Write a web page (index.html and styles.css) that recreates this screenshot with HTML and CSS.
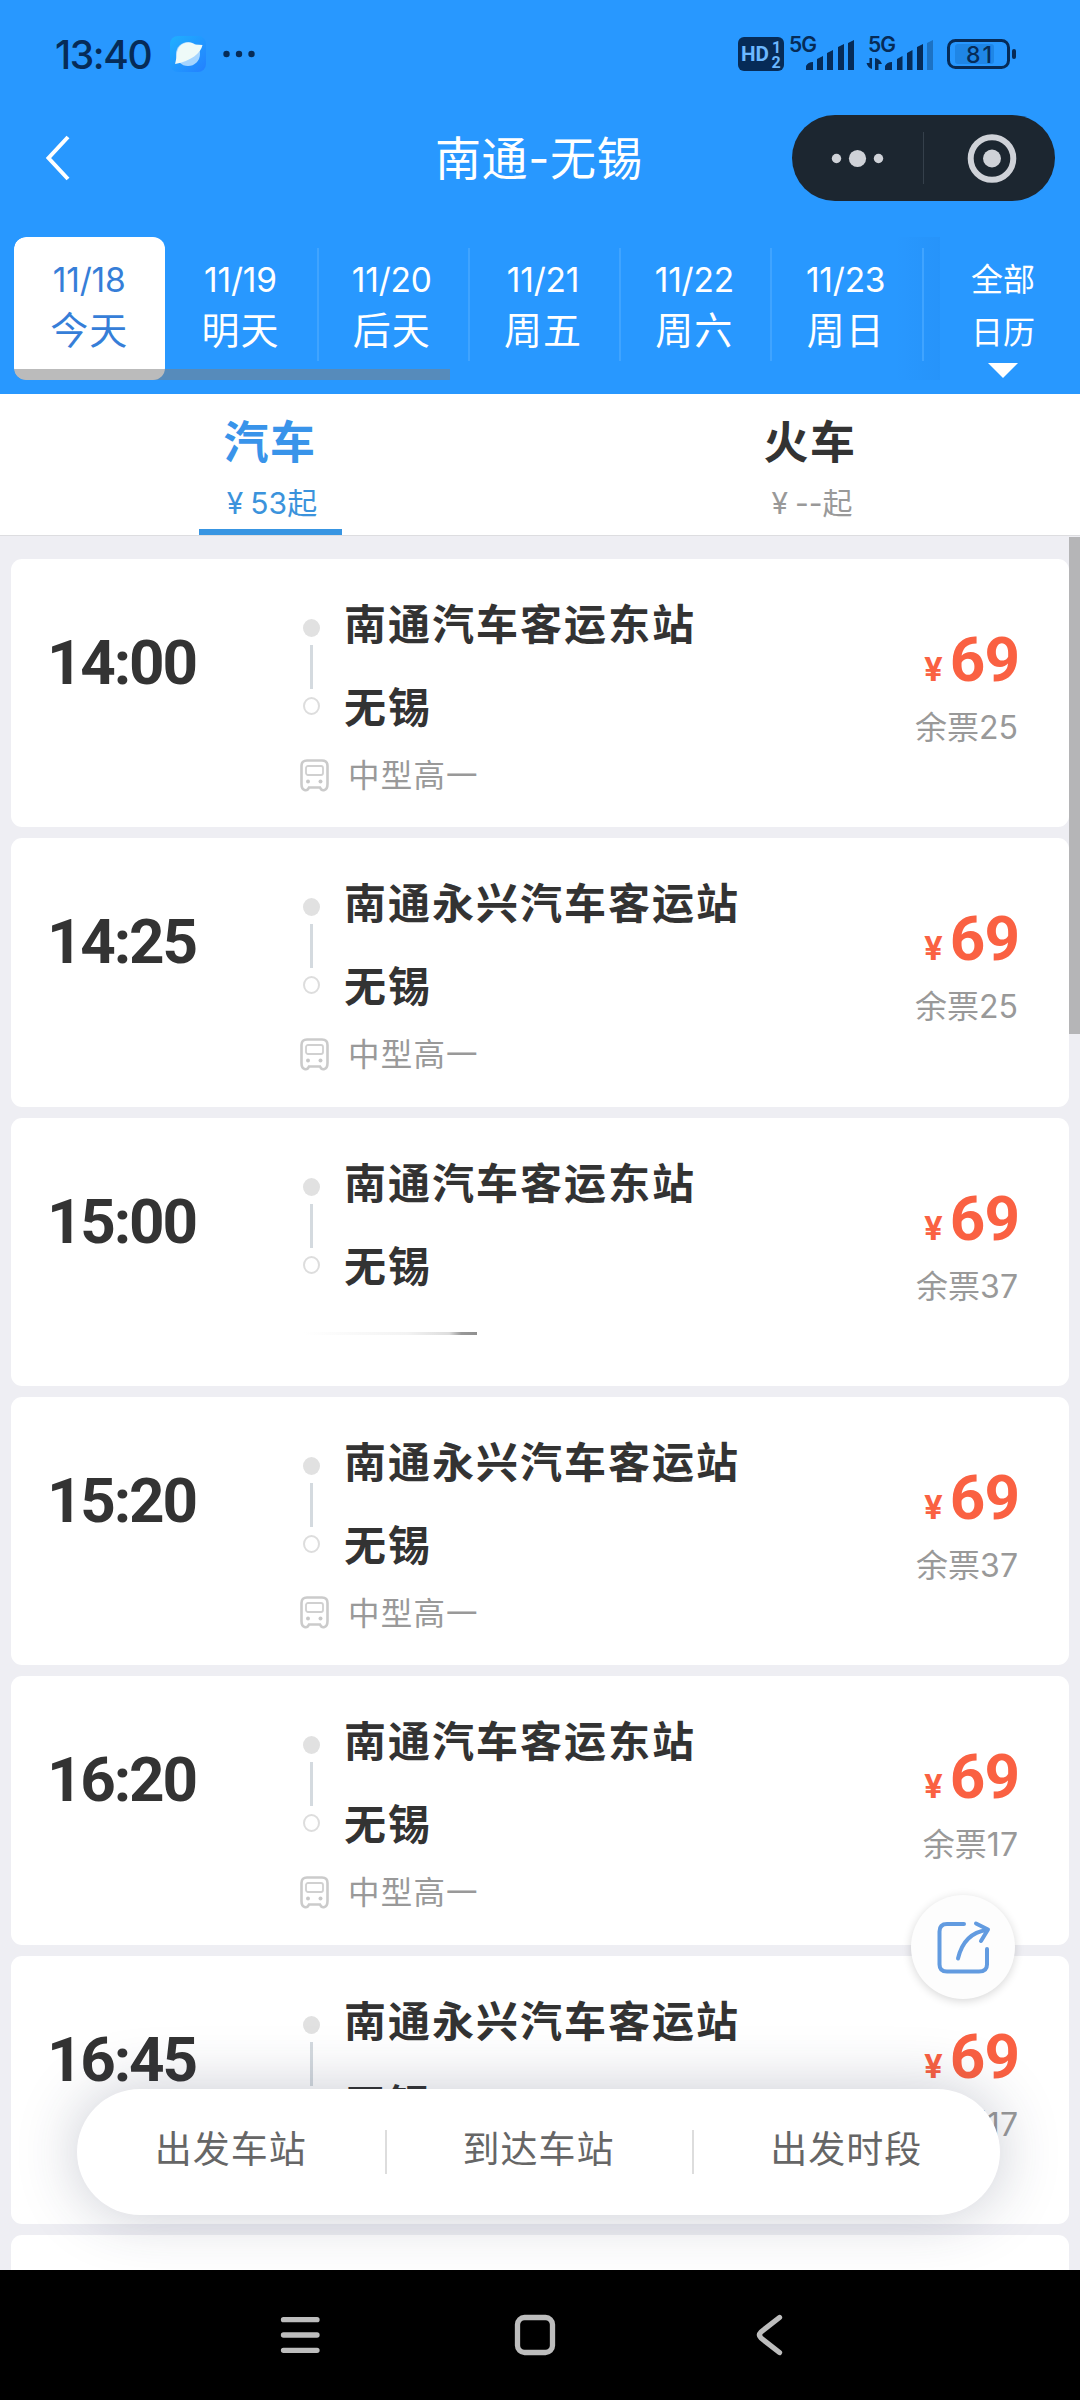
FILE: index.html
```html
<!DOCTYPE html>
<html lang="zh-CN">
  <head>
    <meta charset="UTF-8" />
    <meta name="viewport" content="width=device-width, initial-scale=1.0" />
    <title>南通-无锡</title>
    <link rel="stylesheet" href="styles.css">
  </head>
  <body>
    <svg class="sprite">
      <symbol id="bus" viewBox="0 0 29 33">
        <path d="M7 1.5h15q5.500 0 5.500 5.500v18q0 5-3 6q-3 1-4.500-2.500h-11q-1.500 3.500-4.500 2.500q-3-1-3-6v-18q0-5.500 5.500-5.500z" fill="none" stroke="#cbcbcb" stroke-width="2.600" />
        <rect x="6" y="7" width="17" height="9" rx="2" fill="none" stroke="#d0d0d0" stroke-width="1.800" />
        <circle cx="8" cy="22.500" r="2" fill="#c8c8c8" />
        <circle cx="20.500" cy="22.500" r="2" fill="#c8c8c8" />
      </symbol>
    </svg>
    <div class="phone">
      <header>
        <div class="statusBar">
          <span class="clock">13:40</span>
          <svg class="appIcon" width="36" height="36" viewBox="0 0 36 36">
            <defs>
              <linearGradient id="appBg" x1="0" y1="0" x2="1" y2="1">
                <stop offset="0" stop-color="#1fb0ff" />
                <stop offset="1" stop-color="#2380ff" />
              </linearGradient>
            </defs>
            <rect width="36" height="36" rx="8" fill="url(#appBg)" />
            <circle cx="18" cy="18" r="12" fill="#a5d5ff" />
            <path d="M5 28C7 22 6 17 8.500 12A12 12 0 0 1 25 8.500L32.500 9C31 17 21 25 5 28z" fill="#eefaf8" />
          </svg>
          <svg class="moreDots" width="32" height="8" viewBox="0 0 32 8">
            <circle cx="3.500" cy="4" r="3.200" />
            <circle cx="16" cy="4" r="3.200" />
            <circle cx="28.500" cy="4" r="3.200" />
          </svg>
          <svg class="signals" width="280" height="60" viewBox="738 24 280 60">
            <rect x="738" y="37" width="46" height="34" rx="6" fill="#062b57" />
            <g class="hd">
              <text x="741" y="61" font-size="20" textLength="28" lengthAdjust="spacingAndGlyphs">HD</text>
              <text x="772" y="53" font-size="16">1</text>
              <text x="771.500" y="68" font-size="16">2</text>
            </g>
            <g fill="#062b57">
              <text class="net" x="789" y="52" textLength="28">5G</text>
              <path d="M806 70v-4q2-4 7-4v8zM817 70v-11l6-3v14zM827 70v-17l6-3v20zM838 70v-23l6-3v26zM848 70v-27l6-3v30z" />
              <text class="net" x="868" y="52" textLength="28">5G</text>
              <path d="M872 58v11q-4-1-5.500-6h3v-5zM875 70v-12q5 1 7 6h-3.500v6z" />
              <path d="M885 70v-4q2-4 7-4v8zM897 70v-11l5.500-3v14zM907 70v-17l5.500-3v20zM917 70v-23l6-3v26z" />
              <path d="M927 70v-27l6-3v30z" opacity=".35" />
            </g>
            <rect x="948.500" y="40.500" width="60" height="27" rx="7" fill="none" stroke="#062b57" stroke-width="3" />
            <rect x="955" y="44" width="39" height="20" rx="3" fill="#1f86e6" />
            <rect x="1012" y="49" width="4" height="10" rx="2" fill="#062b57" />
            <text class="battery" x="966" y="62.500" textLength="26">81</text>
          </svg>
        </div>
        <div class="titleBar">
          <svg class="back" width="26" height="48" viewBox="0 0 26 48">
            <path d="M23 3L3.500 24l19.500 21" fill="none" stroke="#fff" stroke-width="4" />
          </svg>
          <h1>南通<span>-</span>无锡</h1>
          <div class="capsule">
            <svg width="263" height="86" viewBox="0 0 263 86">
              <g fill="#cfd2d8">
                <circle cx="44.500" cy="43.500" r="4.700" />
                <circle cx="65.500" cy="43.500" r="8.600" />
                <circle cx="86.500" cy="43.500" r="4.700" />
                <circle cx="200" cy="43.500" r="9" />
              </g>
              <circle cx="200" cy="43.500" r="21.300" fill="none" stroke="#cfd2d8" stroke-width="6" />
              <path d="M131.500 17v52" stroke="#35404b" stroke-width="1" />
            </svg>
          </div>
        </div>
        <div class="dateBar">
          <div class="dates">
            <div class="day active"><span>11/18</span><b>今天</b></div>
            <div class="day"><span>11/19</span><b>明天</b></div>
            <div class="day line"><span>11/20</span><b>后天</b></div>
            <div class="day line"><span>11/21</span><b>周五</b></div>
            <div class="day line"><span>11/22</span><b>周六</b></div>
            <div class="day line"><span>11/23</span><b>周日</b></div>
            <div class="day line next"></div>
            <div class="dateScroll"></div>
          </div>
          <div class="calendar">
            <span>全部</span>
            <span>日历</span>
            <i></i>
          </div>
        </div>
      </header>
      <nav class="tabs">
        <div class="tab active">
          <h2>汽车</h2>
          <p><span>¥</span>53起</p>
        </div>
        <div class="tab">
          <h2>火车</h2>
          <p><span>¥</span><em>--</em>起</p>
        </div>
      </nav>
      <main>
        <div class="card">
          <div class="time">14:00</div>
          <div class="trip">
            <div class="route">
              <div class="rail"><i></i><u></u><s></s></div>
              <div class="stations"><p>南通汽车客运东站</p><p>无锡</p></div>
            </div>
            <div class="meta"><svg><use href="#bus" /></svg>中型高一</div>
          </div>
          <div class="fare">
            <div class="price"><span>¥</span>69</div>
            <div class="left">余票25</div>
          </div>
        </div>
        <div class="card">
          <div class="time">14:25</div>
          <div class="trip">
            <div class="route">
              <div class="rail"><i></i><u></u><s></s></div>
              <div class="stations"><p>南通永兴汽车客运站</p><p>无锡</p></div>
            </div>
            <div class="meta"><svg><use href="#bus" /></svg>中型高一</div>
          </div>
          <div class="fare">
            <div class="price"><span>¥</span>69</div>
            <div class="left">余票25</div>
          </div>
        </div>
        <div class="card">
          <div class="time">15:00</div>
          <div class="trip">
            <div class="route">
              <div class="rail"><i></i><u></u><s></s></div>
              <div class="stations"><p>南通汽车客运东站</p><p>无锡</p></div>
            </div>
            <div class="meta"><div class="trail"></div></div>
          </div>
          <div class="fare">
            <div class="price"><span>¥</span>69</div>
            <div class="left">余票37</div>
          </div>
        </div>
        <div class="card">
          <div class="time">15:20</div>
          <div class="trip">
            <div class="route">
              <div class="rail"><i></i><u></u><s></s></div>
              <div class="stations"><p>南通永兴汽车客运站</p><p>无锡</p></div>
            </div>
            <div class="meta"><svg><use href="#bus" /></svg>中型高一</div>
          </div>
          <div class="fare">
            <div class="price"><span>¥</span>69</div>
            <div class="left">余票37</div>
          </div>
        </div>
        <div class="card">
          <div class="time">16:20</div>
          <div class="trip">
            <div class="route">
              <div class="rail"><i></i><u></u><s></s></div>
              <div class="stations"><p>南通汽车客运东站</p><p>无锡</p></div>
            </div>
            <div class="meta"><svg><use href="#bus" /></svg>中型高一</div>
          </div>
          <div class="fare">
            <div class="price"><span>¥</span>69</div>
            <div class="left">余票17</div>
          </div>
        </div>
        <div class="card">
          <div class="time">16:45</div>
          <div class="trip">
            <div class="route">
              <div class="rail"><i></i><u></u><s></s></div>
              <div class="stations"><p>南通永兴汽车客运站</p><p>无锡</p></div>
            </div>
            <div class="meta"><svg><use href="#bus" /></svg>中型高一</div>
          </div>
          <div class="fare">
            <div class="price"><span>¥</span>69</div>
            <div class="left">余票17</div>
          </div>
        </div>
        <div class="card"></div>
        <div class="pageScroll"></div>
        <div class="share">
          <svg width="60" height="60" viewBox="0 0 60 60">
            <g fill="none" stroke="#629be0" stroke-width="4" stroke-linecap="round" stroke-linejoin="round">
              <path d="M31 8H14q-7.500 0-7.500 7.500v33q0 7 7.500 7h32q8 0 8-7V33" />
              <path d="M25 42.500Q31 17 54 14" />
              <path d="M43 7.500L55 13.500L48 25" />
            </g>
          </svg>
        </div>
        <div class="filterBar">
          <span>出发车站</span>
          <span>到达车站</span>
          <span>出发时段</span>
        </div>
      </main>
      <footer>
        <svg width="520" height="60" viewBox="270 2305 520 60" fill="none" stroke="#bdbdbd" stroke-width="5.300" stroke-linecap="round" stroke-linejoin="round">
          <path d="M283.500 2319.700h33.500M283.500 2335h33.500M283.500 2350.300h33.500" />
          <rect x="517.500" y="2317.500" width="35" height="35" rx="7" />
          <path d="M779.500 2317.500L761 2332q-3 3 0 6l18.500 14.500" />
        </svg>
      </footer>
    </div>
  </body>
</html>
```
FILE: styles.css
```css
* {
  box-sizing: border-box;
}
body {
  margin: 0;
  font-family: "Inter", "Noto Sans CJK SC", sans-serif;
  color: #333333;
}
h1, h2, p {
  margin: 0;
}
.sprite {
  display: none;
}
.phone {
  width: 1080px;
  height: 2400px;
  overflow: hidden;
  display: flex;
  flex-direction: column;
}
header {
  background-color: #2898ff;
  height: 394px;
  flex: none;
}

/* status bar */
.statusBar {
  height: 108px;
  display: flex;
  align-items: center;
  padding: 0 62px 0 55px;
  color: #062b57;
}
.clock {
  font-size: 39px;
  font-weight: 500;
  letter-spacing: -1.4px;
  width: 115px;
}
.moreDots {
  margin-left: 17px;
  fill: #062b57;
}
.signals {
  margin-left: auto;
}
.hd {
  fill: #6cb8ff;
  font-family: "Roboto", sans-serif;
  font-weight: 700;
}
.net {
  font-size: 21px;
  font-weight: 600;
}
.battery {
  font-size: 23px;
  font-weight: 500;
  fill: #062b57;
}

/* title */
.titleBar {
  height: 100px;
  display: flex;
  align-items: center;
  padding: 0 25px 0 45px;
}
.titleBar h1 {
  color: white;
  font-size: 46px;
  font-weight: 400;
  letter-spacing: 0.5px;
  line-height: 60px;
  margin-left: 364px;
}
.titleBar h1 span {
  display: inline-block;
  width: 22px;
  text-align: center;
}
.capsule {
  width: 263px;
  height: 86px;
  margin-left: auto;
  border-radius: 43px;
  background-color: #1c2630;
}

/* dates */
.dateBar {
  display: flex;
  padding: 29px 0 0 14px;
}
.dates {
  position: relative;
  width: 926px;
  height: 143px;
  display: flex;
  overflow: hidden;
  border-radius: 12px 0 0 12px;
  background: linear-gradient(to right, transparent 880px, rgba(0, 40, 120, 0.04));
}
.day {
  flex: none;
  width: 151.3px;
  color: white;
  text-align: center;
  padding: 23px 1px 0 0;
  position: relative;
}
.day span,
.day b {
  display: block;
  font-weight: 400;
}
.day span {
  font-size: 33.5px;
  line-height: 40px;
  letter-spacing: -0.2px;
}
.day b {
  font-size: 38px;
  line-height: 50px;
  margin-top: 5px;
  letter-spacing: 1px;
}
.day.active {
  background-color: white;
  color: #367ed8;
  border-radius: 12px;
}
.day.line::before {
  content: "";
  position: absolute;
  left: 0;
  top: 11px;
  width: 2px;
  height: 113px;
  background-color: #40a4ff;
}
.dateScroll {
  position: absolute;
  left: 0;
  bottom: 0;
  width: 436px;
  height: 11px;
  background-color: rgba(128, 128, 128, 0.535);
}
.calendar {
  flex: 1;
  display: flex;
  flex-direction: column;
  align-items: center;
  color: white;
  font-size: 32px;
  line-height: 53px;
  padding: 16px 14px 0 0;
}
.calendar i {
  border: 15.5px solid transparent;
  border-top-color: white;
  border-bottom: none;
  margin-top: 4px;
}

/* tabs */
.tabs {
  height: 142px;
  flex: none;
  display: flex;
  justify-content: space-around;
  background-color: white;
  border-bottom: 1px solid #dddde0;
}
.tab {
  width: 143px;
  margin: 0 198px;
  text-align: center;
  white-space: nowrap;
}
.tab h2 {
  font-size: 45px;
  line-height: 60px;
  padding-top: 19px;
  letter-spacing: 1.5px;
}
.tab p {
  font-size: 30px;
  line-height: 40px;
  margin-top: 10px;
  color: #999999;
  padding-left: 4px;
}
.tab p span {
  margin-right: 7px;
}
.tab em {
  font-style: normal;
}
.tab.active {
  border-bottom: 6px solid #3895e2;
}
.tab.active h2 {
  color: #3994ea;
}
.tab.active p {
  color: #3b93dc;
}

/* list */
main {
  position: relative;
  height: 1734px;
  flex: none;
  overflow: hidden;
  background-color: #eeeef3;
  padding: 23px 11px 0;
}
.card {
  height: 268.33px;
  margin-bottom: 11px;
  background-color: white;
  border-radius: 11px;
  display: flex;
}
.time {
  width: 288px;
  padding: 74px 0 0 36px;
  font-family: "Roboto", sans-serif;
  font-size: 62px;
  line-height: 60px;
  font-weight: 700;
  letter-spacing: -2.2px;
}
.trip {
  flex: 1;
}
.route {
  display: flex;
  height: 196px;
}
.rail {
  width: 24px;
  padding-top: 60px;
  display: flex;
  flex-direction: column;
  align-items: center;
}
.rail i {
  width: 17px;
  height: 18px;
  border-radius: 50%;
  background-color: #e1e1e1;
}
.rail u {
  width: 3px;
  height: 44px;
  margin: 8px 0;
  background-color: #d4dadf;
}
.rail s {
  width: 17px;
  height: 18px;
  border-radius: 50%;
  border: 2px solid #dddddd;
}
.stations {
  padding: 45px 0 0 21px;
}
.stations p {
  font-size: 42px;
  line-height: 42px;
  font-weight: 700;
  letter-spacing: 2px;
  margin-bottom: 41px;
}
.meta {
  display: flex;
  align-items: center;
  height: 40px;
  font-size: 31.5px;
  line-height: 36px;
  padding-top: 2px;
  color: #999999;
  letter-spacing: 1.2px;
}
.meta svg {
  width: 29px;
  height: 33px;
  margin: 0 19px 2px 1px;
}
.trail {
  width: 174px;
  height: 3px;
  margin: 0 0 3px 4px;
  background: linear-gradient(to right, #ffffff, #f3f3f3 60%, #dddddd 84%, #999999 91%, #909090);
}
.fare {
  padding: 71px 51px 0 0;
  text-align: right;
}
.price {
  font-family: "Roboto", sans-serif;
  font-size: 62px;
  line-height: 60px;
  font-weight: 700;
  color: #fa6142;
  letter-spacing: -1px;
  margin-right: -1px;
}
.price span {
  font-family: "Inter", sans-serif;
  font-size: 33px;
  margin-right: 8px;
}
.left {
  font-size: 32px;
  line-height: 40px;
  margin-top: 9px;
  color: #999999;
}
.pageScroll {
  position: absolute;
  right: 0;
  top: 1px;
  width: 11px;
  height: 497px;
  background-color: #b5b5b7;
}
.share {
  position: absolute;
  left: 911px;
  top: 1359px;
  width: 104px;
  height: 104px;
  border-radius: 50%;
  background-color: #fdfdfd;
  box-shadow: 0 2px 10px rgba(0, 0, 0, 0.16);
  padding: 21px 22px;
}
.filterBar {
  position: absolute;
  left: 77px;
  top: 1553px;
  width: 923px;
  height: 126px;
  border-radius: 63px;
  background-color: white;
  box-shadow: 0 0 60px rgba(40, 48, 80, 0.25);
  display: flex;
  align-items: center;
}
.filterBar span {
  flex: 1;
  text-align: center;
  font-size: 37px;
  line-height: 40px;
  padding: 0 2px 4px 0;
  letter-spacing: 1px;
  color: #666666;
  border-left: 2px solid #dddddd;
}
.filterBar span:first-child {
  border-color: transparent;
}

/* system keys */
footer {
  height: 130px;
  background-color: black;
  padding: 35px 0 0 270px;
}
```
